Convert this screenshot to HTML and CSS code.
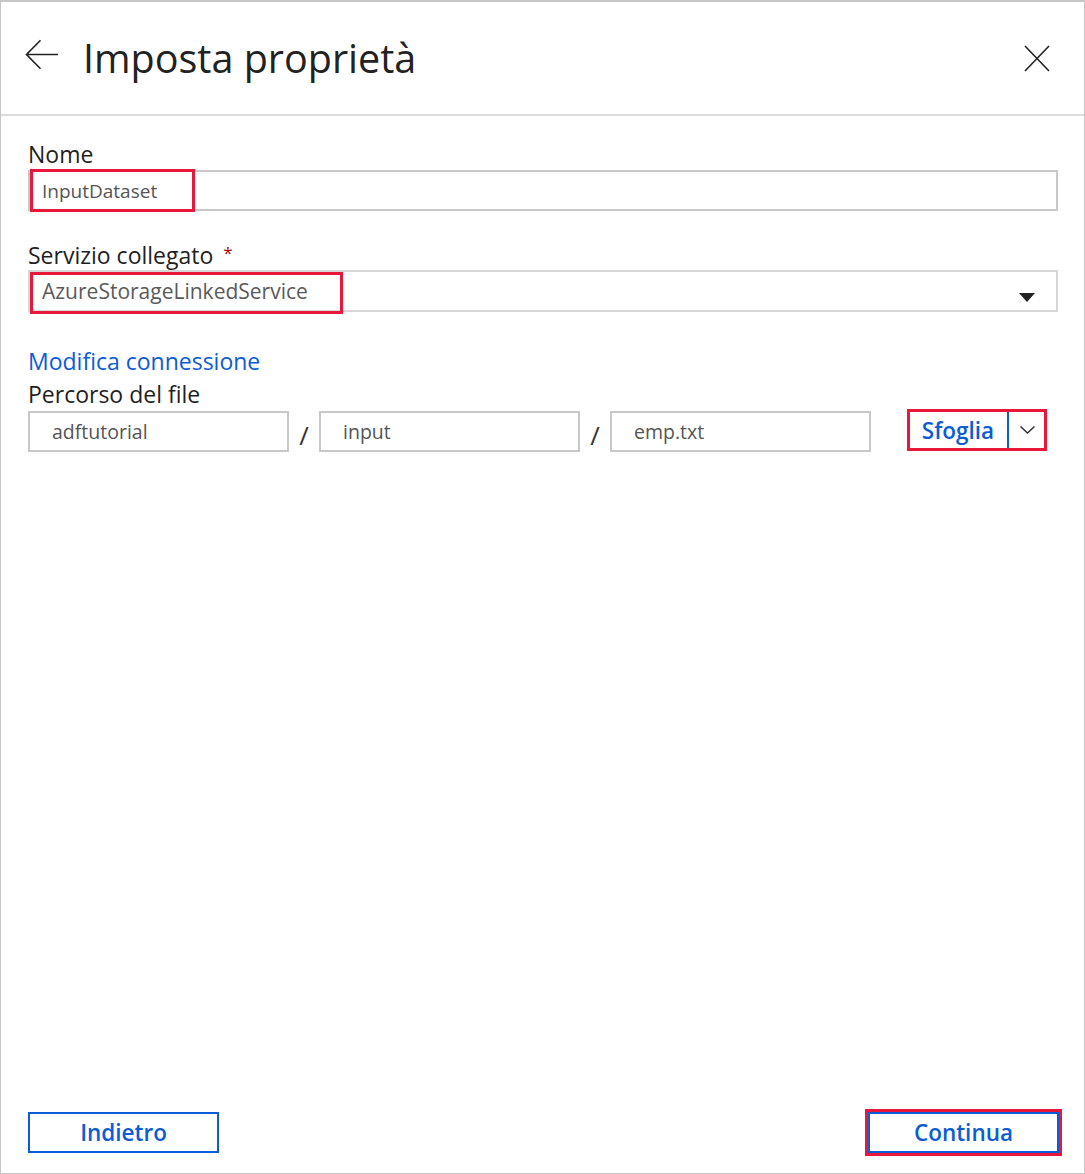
FILE: index.html
```html
<!DOCTYPE html>
<html lang="it">
<head>
<meta charset="utf-8">
<title>Imposta proprietà</title>
<link rel="stylesheet" href="styles.css">
</head>
<body>
<div class="panel">
  <header class="header">
    <button class="icon-btn back" aria-label="Indietro">
      <svg width="33" height="31" viewBox="0 0 33 31"><path d="M33 15.5H1.5M15.5 1.2L1.5 15.5L15.5 29.8" fill="none" stroke="#222" stroke-width="1.6"/></svg>
    </button>
    <h1 class="title">Imposta proprietà</h1>
    <button class="icon-btn close" aria-label="Chiudi">
      <svg width="26" height="27" viewBox="0 0 26 27"><path d="M1 1L25 26M25 1L1 26" fill="none" stroke="#222" stroke-width="1.6"/></svg>
    </button>
  </header>

  <main class="content">
    <div class="field">
      <label class="label">Nome</label>
      <div class="input input-name">
        <span class="value">InputDataset</span>
        <span class="hl hl-name"></span>
      </div>
    </div>

    <div class="field field-linked">
      <label class="label">Servizio collegato<span class="req">*</span></label>
      <div class="input select">
        <span class="value">AzureStorageLinkedService</span>
        <span class="caret"></span>
        <span class="hl hl-linked"></span>
      </div>
    </div>

    <a class="link">Modifica connessione</a>
    <label class="label label-path">Percorso del file</label>
    <div class="path-row">
      <div class="path-box">adftutorial</div>
      <span class="slash">/</span>
      <div class="path-box">input</div>
      <span class="slash">/</span>
      <div class="path-box">emp.txt</div>
      <div class="browse">
        <span class="browse-main">Sfoglia</span>
        <span class="browse-more">
          <svg width="15" height="8" viewBox="0 0 15 8"><path d="M0.5 0.5L7.5 7L14.5 0.5" fill="none" stroke="#333" stroke-width="1.5"/></svg>
        </span>
        <span class="hl hl-browse"></span>
      </div>
    </div>
  </main>

  <footer class="footer">
    <button class="btn">Indietro</button>
    <button class="btn btn-next">Continua<span class="hl hl-next"></span></button>
  </footer>
</div>
</body>
</html>
```

FILE: styles.css
```css
* { box-sizing: border-box; }
html, body { margin: 0; padding: 0; background: #fff; }
body {
  font-family: "Open Sans", "Noto Sans", sans-serif;
  color: #1f1f1f;
}

.panel {
  width: 1085px;
  height: 1174px;
  border: 1px solid #c6c6c6;
  border-top-width: 2px;
  display: flex;
  flex-direction: column;
}

/* Header */
.header {
  height: 114px;
  flex: none;
  display: flex;
  align-items: center;
  padding: 0 34px 0 24px;
  border-bottom: 2px solid #dcdcdc;
}
.icon-btn {
  border: 0;
  background: none;
  padding: 0;
  display: flex;
}
.back { margin-top: -8px; margin-right: 25px; }
.title {
  flex: 1;
  margin: 0;
  font-size: 39.5px;
  font-weight: 400;
  line-height: 52px;
  color: #222;
}

/* Content */
.content {
  flex: 1;
  padding: 24px 26px 0 27px;
}
.field { display: flex; flex-direction: column; }
.field-linked { margin-top: 28px; }
.label {
  display: block;
  font-size: 23px;
  line-height: 28px;
  color: #1f1f1f;
}
.req {
  color: #a80000;
  font-size: 17px;
  margin-left: 10px;
  vertical-align: 5px;
}

.input {
  position: relative;
  height: 41px;
  border: 2px solid #c8c8c8;
  display: flex;
  align-items: center;
  padding-left: 12px;
  font-size: 19px;
  color: #555;
}
.input-name { margin-top: 2px; }
.select {
  height: 42px;
  margin-top: 1px;
  border-color: #d6d6d6;
  font-size: 21px;
  color: #5a5a5a;
}
.caret {
  position: absolute;
  right: 21px;
  top: 21px;
  width: 0;
  height: 0;
  border-left: 8px solid transparent;
  border-right: 8px solid transparent;
  border-top: 9px solid #222;
}

.hl {
  position: absolute;
  border: 3px solid #e8183c;
  pointer-events: none;
}
.hl-name { left: 0; top: -3px; width: 165px; height: 43px; }
.hl-linked { left: 0; top: 0; width: 313px; height: 42px; }

.link {
  display: block;
  margin-top: 35px;
  font-size: 23px;
  line-height: 28px;
  color: #0b5cd5;
}
.label-path { margin-top: 5px; }

.path-row {
  display: flex;
  align-items: flex-start;
  margin-top: 3px;
}
.path-box {
  width: 261px;
  height: 41px;
  border: 2px solid #c8c8c8;
  display: flex;
  align-items: center;
  padding-left: 22px;
  font-size: 19.5px;
  color: #555;
}
.slash {
  width: 30px;
  text-align: center;
  font-size: 26px;
  line-height: 41px;
  color: #333;
  padding-top: 4px;
}
.browse {
  position: relative;
  margin-left: 36px;
  margin-top: -2px;
  height: 42px;
  width: 140px;
  border: 2px solid #0b5cd5;
  display: flex;
}
.browse-main {
  width: 98px;
  display: flex;
  align-items: center;
  justify-content: center;
  font-size: 22.5px;
  font-weight: 600;
  color: #0b5cd5;
}
.browse-more {
  flex: 1;
  border-left: 2px solid #0b5cd5;
  display: flex;
  align-items: center;
  justify-content: center;
}
.hl-browse { inset: -2px; }

/* Footer */
.footer {
  flex: none;
  display: flex;
  justify-content: space-between;
  padding: 0 25px 20px 27px;
}
.btn {
  position: relative;
  width: 191px;
  height: 41px;
  border: 2px solid #0b5cd5;
  background: #fff;
  color: #0b5cd5;
  font-family: inherit;
  font-size: 22.5px;
  font-weight: 600;
  padding: 0;
}
.hl-next { inset: -5px; }
```
